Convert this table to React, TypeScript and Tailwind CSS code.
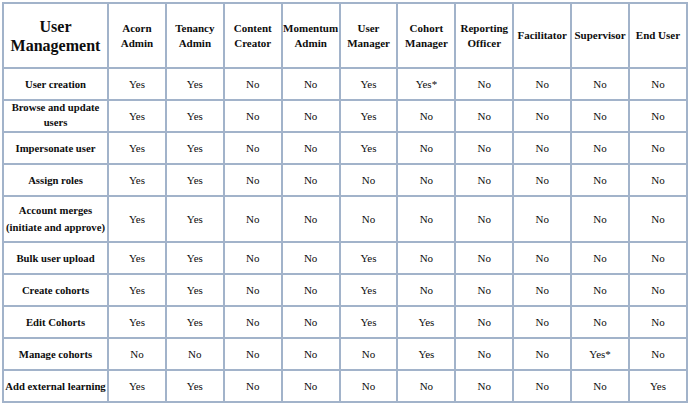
const roles = [
  ["Acorn", "Admin"],
  ["Tenancy", "Admin"],
  ["Content", "Creator"],
  ["Momentum", "Admin"],
  ["User", "Manager"],
  ["Cohort", "Manager"],
  ["Reporting", "Officer"],
  ["Facilitator"],
  ["Supervisor"],
  ["End User"],
];

const rows: { label: string[]; tall?: boolean; values: string[] }[] = [
  { label: ["User creation"], values: ["Yes", "Yes", "No", "No", "Yes", "Yes*", "No", "No", "No", "No"] },
  { label: ["Browse and update", "users"], values: ["Yes", "Yes", "No", "No", "Yes", "No", "No", "No", "No", "No"] },
  { label: ["Impersonate user"], values: ["Yes", "Yes", "No", "No", "Yes", "No", "No", "No", "No", "No"] },
  { label: ["Assign roles"], values: ["Yes", "Yes", "No", "No", "No", "No", "No", "No", "No", "No"] },
  {
    label: ["Account merges", "(initiate and approve)"],
    tall: true,
    values: ["Yes", "Yes", "No", "No", "No", "No", "No", "No", "No", "No"],
  },
  { label: ["Bulk user upload"], values: ["Yes", "Yes", "No", "No", "Yes", "No", "No", "No", "No", "No"] },
  { label: ["Create cohorts"], values: ["Yes", "Yes", "No", "No", "Yes", "No", "No", "No", "No", "No"] },
  { label: ["Edit Cohorts"], values: ["Yes", "Yes", "No", "No", "Yes", "Yes", "No", "No", "No", "No"] },
  { label: ["Manage cohorts"], values: ["No", "No", "No", "No", "No", "Yes", "No", "No", "Yes*", "No"] },
  { label: ["Add external learning"], values: ["Yes", "Yes", "No", "No", "No", "No", "No", "No", "No", "Yes"] },
];

// serif set on every cell, tables don't always inherit it
const cell =
  "border-2 border-[#a2b3ca] text-center align-middle p-0 text-[#0d0d0d] [font-family:'Liberation_Serif','Times_New_Roman',serif]";

export default function App() {
  return (
    <div className="h-[405px] w-[688px] overflow-hidden bg-white pl-[2px] pt-[2px]">
      <table className="w-[684px] table-fixed border-collapse">
        <colgroup>
          <col className="w-[105px]" />
          {roles.map((_, i) => (
            <col key={i} className="w-[57.9px]" />
          ))}
        </colgroup>
        <thead>
          <tr className="h-[65px]">
            <th className={`${cell} text-[16px] leading-[19px] font-bold`}>
              User
              <br />
              Management
            </th>
            {roles.map((r, i) => (
              <th key={i} className={`${cell} text-[11px] leading-[15px] font-bold whitespace-nowrap`}>
                {r.map((line, j) => (
                  <div key={j}>{line}</div>
                ))}
              </th>
            ))}
          </tr>
        </thead>
        <tbody>
          {rows.map((row, i) => (
            <tr key={i} className={row.tall ? "h-[46px]" : "h-[32px]"}>
              <td className={`${cell} text-[10.7px] leading-[17px] font-bold whitespace-nowrap`}>
                {row.label.map((line, j) => (
                  <div key={j} className={j === 0 && row.label.length > 1 && !row.tall ? "leading-[13px]" : ""}>
                    {line}
                  </div>
                ))}
              </td>
              {row.values.map((v, j) => (
                <td key={j} className={`${cell} text-[11px]`}>
                  {v}
                </td>
              ))}
            </tr>
          ))}
        </tbody>
      </table>
    </div>
  );
}
